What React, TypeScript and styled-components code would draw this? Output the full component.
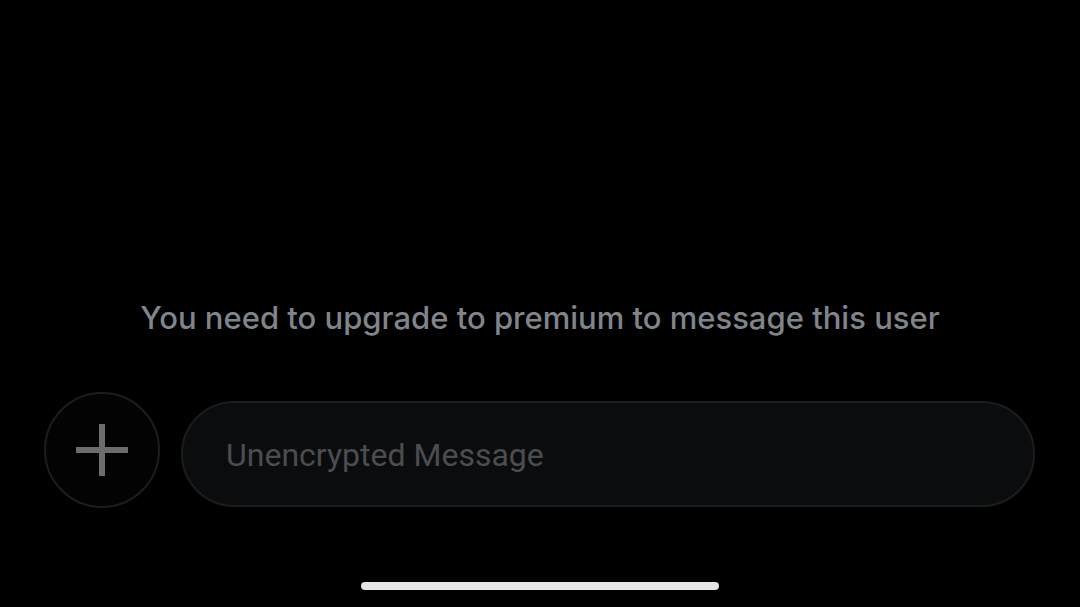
import React from "react";
import styled, { createGlobalStyle } from "styled-components";

const Global = createGlobalStyle`
  html, body { margin: 0; padding: 0; background: #000; }
  #root { width: 1080px; height: 607px; }
`;

const Screen = styled.div`
  width: 1080px;
  height: 607px;
  background: #000;
  display: flex;
  flex-direction: column;
  box-sizing: border-box;
  padding-top: 296px;
`;

const Notice = styled.div`
  font-family: Inter, "Noto Sans", sans-serif;
  font-size: 31px;
  font-weight: 500;
  line-height: 44px;
  color: #80848b;
  text-align: center;
  height: 44px;
`;

const Composer = styled.div`
  display: flex;
  align-items: flex-end;
  gap: 21px;
  padding: 0 45px 0 44px;
  margin-top: 52px;
`;

const PlusButton = styled.div`
  width: 116px;
  height: 116px;
  flex: none;
  box-sizing: border-box;
  border-radius: 50%;
  border: 2px solid #1c1d20;
  background: #030303;
  display: flex;
  align-items: center;
  justify-content: center;
`;

const Input = styled.div`
  flex: 1;
  height: 106px;
  box-sizing: border-box;
  border-radius: 53px;
  border: 2px solid #1b1c1e;
  background: #0b0c0d;
  display: flex;
  align-items: center;
  padding-left: 43px;
  margin-bottom: 1px;
`;

const Placeholder = styled.span`
  font-family: Roboto, "Noto Sans", sans-serif;
  font-size: 32px;
  color: #4b4d50;
  padding-top: 2px;
`;

const Spacer = styled.div`
  flex: 1;
`;

const HomeBar = styled.div`
  align-self: center;
  width: 358px;
  height: 8px;
  border-radius: 4px;
  background: #e6e6e6;
  margin-bottom: 17px;
`;

export default function App() {
  return (
    <>
      <Global />
      <Screen>
        <Notice>You need to upgrade to premium to message this user</Notice>
        <Composer>
          <PlusButton>
            <svg width="54" height="54" viewBox="0 0 54 54">
              <path d="M27 1 V53 M1 27 H53" stroke="#6c6c6c" strokeWidth="6" />
            </svg>
          </PlusButton>
          <Input>
            <Placeholder>Unencrypted Message</Placeholder>
          </Input>
        </Composer>
        <Spacer />
        <HomeBar />
      </Screen>
    </>
  );
}
